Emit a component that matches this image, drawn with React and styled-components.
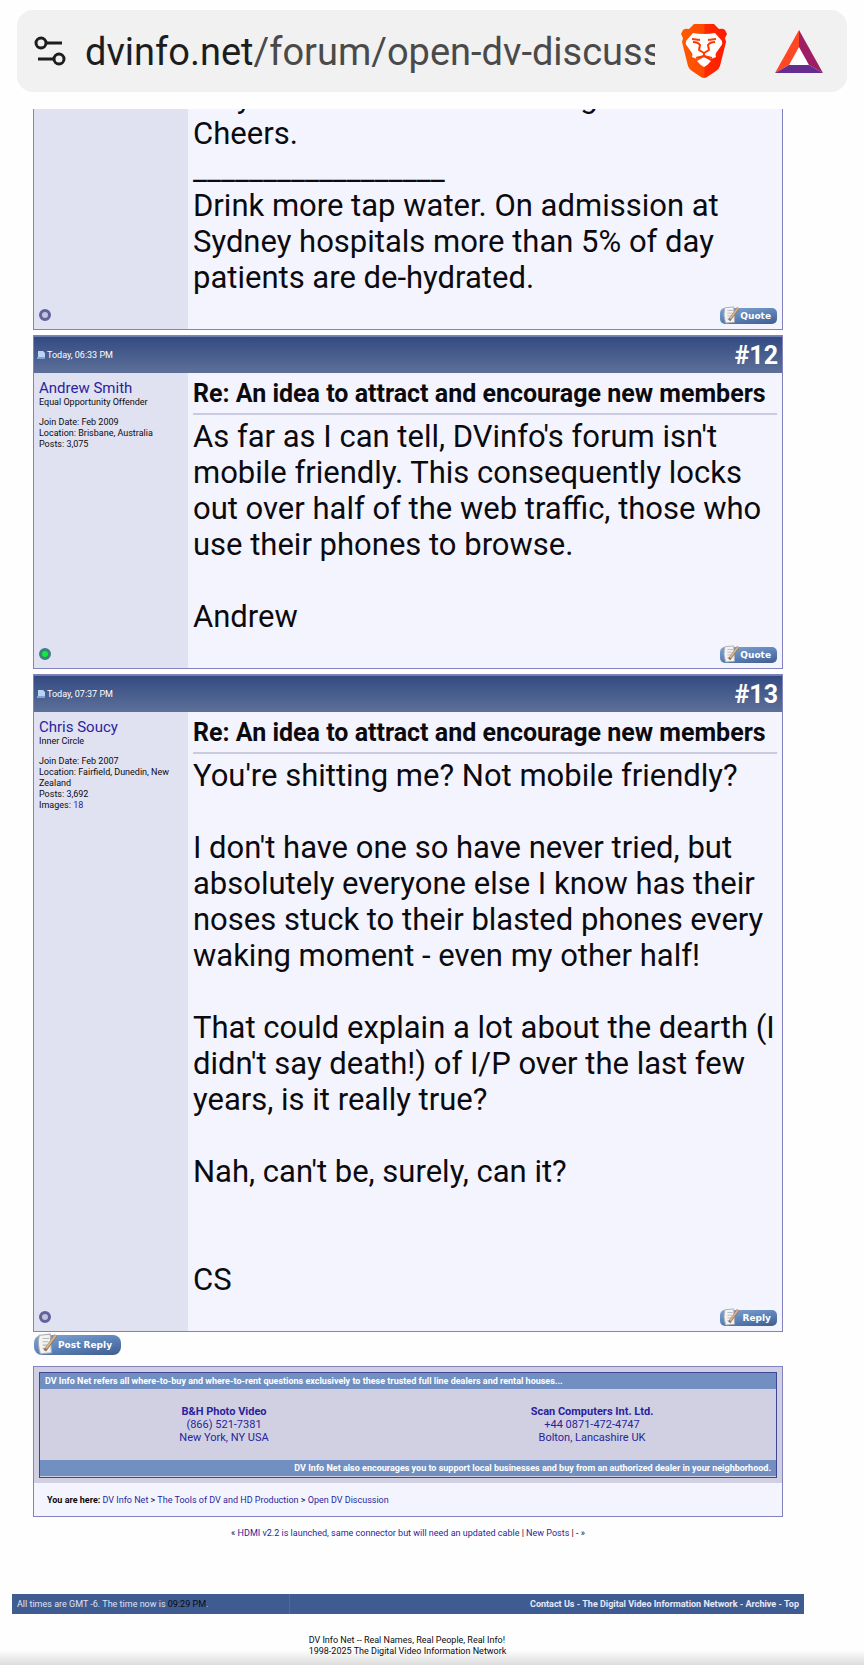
import React from "react";
import styled, { createGlobalStyle, css } from "styled-components";

const GlobalStyle = createGlobalStyle`
  * {
    box-sizing: border-box;
  }
  body {
    margin: 0;
    background: #fefefe;
    color: #0b0b0f;
    font-family: Roboto, "Liberation Sans", sans-serif;
  }
  a {
    color: #2a1f9c;
    text-decoration: none;
  }
`;

const Screen = styled.div`
  position: relative;
`;

const AddressBar = styled.header`
  display: flex;
  align-items: center;
  gap: 18px;
  height: 82px;
  margin: 10px 17px 17px;
  padding: 0 24px 0 17px;
  border-radius: 16px;
  background: #f1f1f1;
`;

const IconButton = styled.button`
  display: flex;
  flex: none;
  padding: 0;
  border: 0;
  background: none;
`;

const Address = styled.div`
  flex: 1;
  overflow: hidden;
  padding-top: 2px;
  white-space: nowrap;
  font-size: 38px;
  line-height: 52px;
  color: #4a4a4a;
  span {
    color: #1d1d1d;
  }
`;

const BarActions = styled.div`
  display: flex;
  align-items: center;
  gap: 48px;
  margin-left: 8px;
`;

const Forum = styled.main`
  display: flex;
  flex-direction: column;
  margin: 0 81px 0 33px;
`;

const PostCard = styled.article`
  margin-bottom: 5px;
  border: 1px solid #8282be;
  ${(props) =>
    props.$clipped &&
    css`
      display: flex;
      flex-direction: column;
      justify-content: flex-end;
      height: 221px;
      overflow: hidden;
      border-top: 0;
    `}
`;

const PostHeader = styled.div`
  display: flex;
  align-items: center;
  justify-content: space-between;
  height: 37px;
  padding: 0 4px 0 3px;
  border-top: 1px solid #6f7fb0;
  background: linear-gradient(#334b82, #5d7099);
  color: #fff;
`;

const PostTime = styled.span`
  display: flex;
  align-items: center;
  gap: 2px;
  font-size: 9px;
`;

const PostNumber = styled.a`
  font-size: 25px;
  font-weight: 700;
  color: #fff;
`;

const PostColumns = styled.div`
  display: grid;
  grid-template-columns: 154px 1fr;
  flex: none;
`;

const UserColumn = styled.aside`
  display: flex;
  flex-direction: column;
  padding: 6px 5px 8px;
  background: #e0e1f1;
  font-size: 9px;
  line-height: 11px;
`;

const UserName = styled.a`
  font-size: 15px;
  line-height: 18px;
`;

const UserFacts = styled.div`
  margin-top: 9px;
`;

const Status = styled.span`
  width: 12px;
  height: 12px;
  margin-top: auto;
  border: 3px solid ${(props) => (props.$online ? "#3f7f80" : "#62629c")};
  border-radius: 50%;
  background: ${(props) => (props.$online ? "#0fec3c" : "#c3c3dc")};
`;

const Message = styled.div`
  display: flex;
  flex-direction: column;
  padding: 6px 5px 5px;
  background: #f4f4fe;
`;

const MessageTitle = styled.h2`
  margin: 0 0 4px;
  padding-bottom: 4px;
  border-bottom: 2px solid #cbcbe0;
  font-size: 25px;
  line-height: 30px;
  font-weight: 700;
  white-space: nowrap;
`;

const MessageText = styled.div`
  font-size: 31px;
  line-height: 36px;
  white-space: pre-line;
`;

const MessageActions = styled.div`
  display: flex;
  justify-content: flex-end;
  margin-top: 12px;
`;

const NoteButton = styled.button`
  position: relative;
  display: flex;
  align-items: center;
  justify-content: flex-end;
  width: ${(props) => (props.$large ? "87px" : "57px")};
  height: ${(props) => (props.$large ? "20px" : "16px")};
  padding: 0 ${(props) => (props.$large ? "9px" : "6px")} 0 0;
  border: 0;
  border-radius: ${(props) => (props.$large ? "8px" : "5px")};
  background: linear-gradient(170deg, #7fa3d3, #5a7fb4 55%, #3f5c8e);
  color: #fff;
  font: 700 9px "DejaVu Sans", sans-serif;
  svg {
    position: absolute;
    left: 2px;
    bottom: 0;
  }
`;

const ReplyRow = styled.div`
  margin-top: -2px;
  padding: 0 0 11px 1px;
`;

const DealerPanel = styled.section`
  border: 1px solid #8282be;
  background: #f4f4fe;
`;

const DealerFrame = styled.div`
  padding: 5px;
  background: #d0d0e2;
`;

const DealerBox = styled.div`
  padding-bottom: 1px;
  border: 1px solid #3f4596;
`;

const DealerStrip = styled.p`
  margin: 0;
  padding: 0 5px;
  background: #7190c1;
  color: #fff;
  font-size: 9px;
  line-height: 16px;
  font-weight: 700;
  text-align: ${(props) => props.$align};
`;

const DealerList = styled.div`
  display: grid;
  grid-template-columns: 1fr 1fr;
  padding: 16px 0;
`;

const Dealer = styled.a`
  display: flex;
  flex-direction: column;
  align-items: center;
  font-size: 11px;
  line-height: 13px;
`;

const Breadcrumb = styled.nav`
  padding: 11px 13px 10px;
  font-size: 9px;
  line-height: 12px;
`;

const ThreadNav = styled.nav`
  margin: 10px 0 0;
  font-size: 9px;
  line-height: 12px;
  text-align: center;
`;

const FooterBar = styled.footer`
  display: flex;
  align-items: center;
  height: 20px;
  margin: 55px 60px 0 12px;
  padding: 0 5px;
  background: #3e5b92;
  color: #dfe4f4;
  font-size: 9px;
`;

const Clock = styled.p`
  flex: none;
  width: 273px;
  margin: 0;
  line-height: 20px;
  border-right: 1px solid #4e6aa0;
  span {
    color: #0b0b0f;
  }
`;

const FooterLinks = styled.div`
  flex: 1;
  text-align: right;
  font-weight: 700;
  a {
    color: #e6eaf8;
  }
`;

const Copyright = styled.div`
  display: flex;
  justify-content: center;
  margin: 21px 49px 0 0;
  padding-bottom: 9px;
  font-size: 9px;
  line-height: 11px;
`;

const BottomShade = styled.div`
  position: absolute;
  right: 0;
  bottom: 0;
  left: 0;
  height: 16px;
  background: linear-gradient(rgba(0, 0, 0, 0), rgba(0, 0, 0, 0.14));
`;

const SiteSettingsIcon = () => (
  <svg width="33" height="32" viewBox="0 0 33 32" fill="none" stroke="#1d1d1d" strokeWidth="3">
    <circle cx="7" cy="8" r="5" />
    <path d="M12 8h16M4 24h16" />
    <circle cx="25" cy="24" r="5" />
  </svg>
);

const BraveIcon = () => (
  <svg width="46" height="54" viewBox="0 0 46 54">
    <defs>
      <linearGradient id="brave">
        <stop offset="0" stopColor="#ff5a00" />
        <stop offset="0.5" stopColor="#ff4a00" />
        <stop offset="0.52" stopColor="#ff2a00" />
        <stop offset="1" stopColor="#ff1a00" />
      </linearGradient>
    </defs>
    <path
      fill="url(#brave)"
      d="M13 0h20l5 5q4-1 6 1l2 4-2 4 1 4-6 24q-1 3-4 5l-9 6q-3 2-6 0l-9-6q-3-2-4-5L1 18l1-4-2-4 2-4q2-2 6-1z"
    />
    <path
      fill="#fff"
      d="M5 17l7-8q5 1 11 1t11-1l7 8q1 3-1 5l-5 7q-1 2 0 4l-5 2-7-4-7 4-5-2q1-2 0-4l-5-7q-2-2-1-5z"
    />
    <path fill="#fff" d="M16 37l7-4 7 4q-3 4-7 6-4-2-7-6z" />
    <path
      fill="none"
      stroke="#ff3a00"
      strokeWidth="2"
      strokeLinejoin="round"
      d="M11 15l8 1M35 15l-8 1M12 18q5 0 7 3l-1 5 5 3 5-3-1-5q2-3 7-3M23 29v4M15 34l8-2 8 2"
    />
  </svg>
);

const RewardsIcon = () => (
  <svg width="48" height="43" viewBox="0 0 48 43">
    <path fill="#fff" d="M24 16l10 19H14z" />
    <path fill="#ff4724" d="M24 0v17l-10 18L0 43z" />
    <path fill="#9e1f63" d="M24 0l24 43-14-8-10-18z" />
    <path fill="#662d91" d="M0 43l14-8h20l14 8z" />
  </svg>
);

const PostIcon = () => (
  <svg width="8" height="8" viewBox="0 0 8 8">
    <path fill="#b9d4f3" d="M1 0h5l2 2v5H1z" />
    <path fill="#7ba3dc" d="M0 6h8v2H0z" />
  </svg>
);

const NoteIcon = ({ size }) => (
  <svg width={size} height={size} viewBox="0 0 20 20">
    <path fill="#f3f3f0" stroke="#a9adb8" d="M3 2l10-1 1 17-10 1Q1 10 3 2z" />
    <path stroke="#b4b8c2" d="M6 5h6M6 8h5M6 11h4M6 14h3" />
    <path stroke="#8b7465" strokeWidth="3" d="M8 16l10-14" />
    <path stroke="#deb183" strokeWidth="2" d="M9 14l9-12" />
  </svg>
);

const posts = [
  {
    clipped: true,
    text: `May be the other forum can get it back.
      Cheers.
      __________________
      Drink more tap water. On admission at Sydney hospitals more than 5% of day patients are de-hydrated.`,
    action: "Quote",
  },
  {
    number: 12,
    time: "Today, 06:33 PM",
    user: "Andrew Smith",
    rank: "Equal Opportunity Offender",
    joined: "Feb 2009",
    location: "Brisbane, Australia",
    count: "3,075",
    online: true,
    text: `As far as I can tell, DVinfo's forum isn't mobile friendly. This consequently locks out over half of the web traffic, those who use their phones to browse.

      Andrew`,
    action: "Quote",
  },
  {
    number: 13,
    time: "Today, 07:37 PM",
    user: "Chris Soucy",
    rank: "Inner Circle",
    joined: "Feb 2007",
    location: "Fairfield, Dunedin, New Zealand",
    count: "3,692",
    images: 18,
    text: `You're shitting me? Not mobile friendly?

      I don't have one so have never tried, but absolutely everyone else I know has their noses stuck to their blasted phones every waking moment - even my other half!

      That could explain a lot about the dearth (I didn't say death!) of I/P over the last few years, is it really true?

      Nah, can't be, surely, can it?


      CS`,
    action: "Reply",
  },
];

const Post = ({ post }) => (
  <PostCard $clipped={post.clipped}>
    {post.number && (
      <PostHeader>
        <PostTime>
          <PostIcon />
          {post.time}
        </PostTime>
        <PostNumber href={`#${post.number}`}>#{post.number}</PostNumber>
      </PostHeader>
    )}
    <PostColumns>
      <UserColumn>
        {post.user && (
          <>
            <UserName href="#user">{post.user}</UserName>
            <div>{post.rank}</div>
            <UserFacts>
              <div>Join Date: {post.joined}</div>
              <div>Location: {post.location}</div>
              <div>Posts: {post.count}</div>
              {post.images && (
                <div>
                  Images: <a href="#images">{post.images}</a>
                </div>
              )}
            </UserFacts>
          </>
        )}
        <Status $online={post.online} />
      </UserColumn>
      <Message>
        {post.number && (
          <MessageTitle>
            Re: An idea to attract and encourage new members
          </MessageTitle>
        )}
        <MessageText>{post.text}</MessageText>
        <MessageActions>
          <NoteButton>
            <NoteIcon size={18} />
            {post.action}
          </NoteButton>
        </MessageActions>
      </Message>
    </PostColumns>
  </PostCard>
);

const App = () => {
  return (
    <Screen>
      <GlobalStyle />
      <AddressBar>
        <IconButton aria-label="Site settings">
          <SiteSettingsIcon />
        </IconButton>
        <Address>
          <span>dvinfo.net</span>/forum/open-dv-discussion
        </Address>
        <BarActions>
          <IconButton aria-label="Brave Shields">
            <BraveIcon />
          </IconButton>
          <IconButton aria-label="Brave Rewards">
            <RewardsIcon />
          </IconButton>
        </BarActions>
      </AddressBar>
      <Forum>
        {posts.map((post, index) => (
          <Post key={index} post={post} />
        ))}
        <ReplyRow>
          <NoteButton $large>
            <NoteIcon size={22} />
            Post Reply
          </NoteButton>
        </ReplyRow>
        <DealerPanel>
          <DealerFrame>
            <DealerBox>
              <DealerStrip $align="left">
                DV Info Net refers all where-to-buy and where-to-rent questions
                exclusively to these trusted full line dealers and rental
                houses...
              </DealerStrip>
              <DealerList>
                <Dealer href="#bh">
                  <b>B&amp;H Photo Video</b>
                  <span>(866) 521-7381</span>
                  <span>New York, NY USA</span>
                </Dealer>
                <Dealer href="#scan">
                  <b>Scan Computers Int. Ltd.</b>
                  <span>+44 0871-472-4747</span>
                  <span>Bolton, Lancashire UK</span>
                </Dealer>
              </DealerList>
              <DealerStrip $align="right">
                DV Info Net also encourages you to support local businesses and
                buy from an authorized dealer in your neighborhood.
              </DealerStrip>
            </DealerBox>
          </DealerFrame>
          <Breadcrumb>
            <b>You are here:</b> <a href="#home">DV Info Net</a> &gt;{" "}
            <a href="#tools">The Tools of DV and HD Production</a> &gt;{" "}
            <a href="#open">Open DV Discussion</a>
          </Breadcrumb>
        </DealerPanel>
        <ThreadNav>
          «{" "}
          <a href="#previous">
            HDMI v2.2 is launched, same connector but will need an updated cable
          </a>{" "}
          | <a href="#new">New Posts</a> | - »
        </ThreadNav>
      </Forum>
      <FooterBar>
        <Clock>
          All times are GMT -6. The time now is <span>09:29 PM</span>.
        </Clock>
        <FooterLinks>
          <a href="#contact">Contact Us</a> -{" "}
          <a href="#network">The Digital Video Information Network</a> -{" "}
          <a href="#archive">Archive</a> - <a href="#top">Top</a>
        </FooterLinks>
      </FooterBar>
      <Copyright>
        <div>
          DV Info Net -- Real Names, Real People, Real Info!
          <br />
          1998-2025 The Digital Video Information Network
        </div>
      </Copyright>
      <BottomShade />
    </Screen>
  );
};

export default App;
